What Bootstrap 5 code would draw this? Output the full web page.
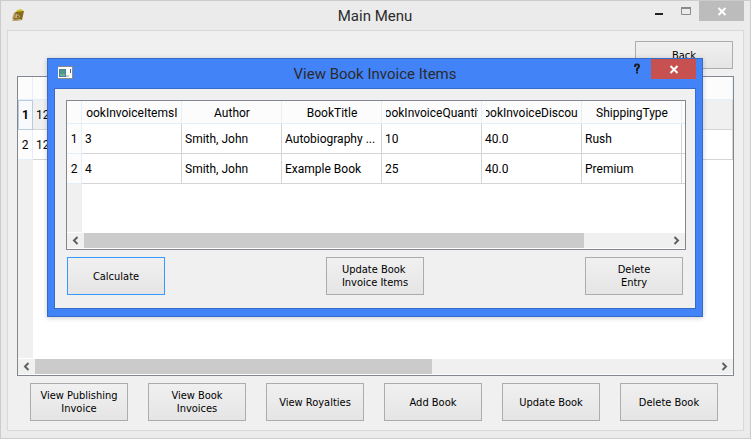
<!DOCTYPE html>
<html lang="en">
<head>
<meta charset="utf-8">
<meta name="viewport" content="width=device-width, initial-scale=1">
<title>Main Menu</title>
<link href="https://cdn.jsdelivr.net/npm/bootstrap@5.3.0/dist/css/bootstrap.min.css" rel="stylesheet">
<style>
  body { font-family: Roboto, "Noto Sans", sans-serif; font-size: 12px; line-height: 16px; color: #000; background: #ebebeb; }
  .main-window { background: #ebebeb; border: 1px solid #ccc; padding: 0 6px 7px; }
  .title-strip { height: 29px; }
  .title-text { font-size: 15px; line-height: 20px; font-weight: 400; color: #2b2b2b; margin: 0; padding-top: 5px; }
  .main-title { padding-left: 78px; }
  .app-icon { width: 16px; height: 16px; margin: 6px 0 0 4px; }
  .caption-btn { border: 0; padding: 0; background: transparent; height: 20px; width: 27px; }
  .caption-btn.closer { width: 45px; background: #bcbcbc; }
  .dialog-window .caption-btn.closer { background: #c75050; }
  .caption-btn svg, .arrow-btn svg { display: block; margin: auto; }
  .client-area { background: #f0f0f0; border: 1px solid #d9d9d9; }
  .main-client { padding: 10px 9px 9px; }
  .push { font-family: "DejaVu Sans Condensed", "DejaVu Sans", sans-serif; font-size: 11px; line-height: 13px; color: #000;
    width: 98px; height: 38px; padding: 0; border: 1px solid #acacac; border-radius: 0;
    background: linear-gradient(#f0f0f0, #e5e5e5); white-space: pre-line; }
  .push:hover { border-color: #7eb4ea; color: #000; }
  .push-short { height: 28px; }
  .push-default { border-color: #3399ff; }
  .push-label { display: inline-block; text-align: left; white-space: pre; }
  .back-row { padding-right: 1px; }
  .frame { background: #fff; border: 1px solid #828790; overflow: hidden; }
  .main-frame { margin-top: 7px; }
  .grid-table { table-layout: fixed; border-collapse: separate; border-spacing: 0; margin: 0; }
  .grid-table th, .grid-table td { padding: 0 2px 0 3px; height: 30px; border: 0 solid #d4d4d4; border-width: 0 1px 1px 0;
    font-weight: 400; white-space: nowrap; overflow: hidden; text-overflow: ellipsis; vertical-align: middle; }
  .grid-table thead th, .grid-table tbody th { background: #fcfcfc; border-color: #e5effa; text-align: center; }
  .grid-table thead th { height: 23px; padding: 2px 3px 0 4px; }
  .grid-table tbody th { padding: 0; }
  .grid-table tbody .current-head { font-weight: 700; border: 1px solid #b9cbe0; background: #f8fafd; }
  .grid-table .current-row td { background: #f0f0f0; }
  .index-col { width: 15px; }
  .field-col { width: 100px; }
  .inner-table { width: 715px; }
  .head-clip { display: flex; justify-content: center; overflow: hidden; }
  .index-strip { width: 15px; background: #f0f0f0; margin-bottom: 1px; }
  .scroll-track { background: #f0f0f0; height: 15px; margin-bottom: 1px; }
  .arrow-btn { width: 17px; flex: none; border: 0; padding: 0; background: transparent; }
  .thumb { background: #cbcbcb; }
  .action-row { gap: 20px; margin-top: 7px; padding-right: 3px; }
  .dialog-window { position: absolute; left: 47px; right: 48px; top: 58px; background: #4283f8; border: 1px solid #376bc8;
    padding: 0 6px 7px; box-shadow: 0 1px 5px rgba(0, 0, 0, .2); }
  .dialog-title { padding-left: 52px; }
  .dialog-client { border-color: #376bc8; padding: 11px 9px 13px 11px; }
  .dialog-frame { height: 150px; }
  .dialog-actions { margin: 7px 3px 0 1px; }
</style>
<script src="https://cdn.jsdelivr.net/npm/bootstrap@5.3.0/dist/js/bootstrap.bundle.min.js"></script>
</head>
<body>
<div class="main-window d-flex flex-column min-vh-100">
  <header class="title-strip d-flex align-items-start">
    <svg class="app-icon" viewBox="0 0 16 16" aria-hidden="true">
      <path d="M6 3l4-1 3 2-1 1H5z" fill="#c9c832"/>
      <path d="M4 5l9-1-2 9-9 1z" fill="#8a6a1c"/>
      <path d="M3 6l2-1-2 7H1z" fill="#b59a5c"/>
      <path d="M5 7l3 1 1 2-5 1z" fill="#c9b98a"/>
      <path d="M6 9l1-1 1 2-2 0z" fill="#6e5110"/>
      <path d="M1 13.500l9-1" stroke="#cbb98a" fill="none"/>
    </svg>
    <h1 class="title-text main-title flex-grow-1 text-center">Main Menu</h1>
    <button class="caption-btn" type="button" aria-label="Minimize"><svg width="27" height="20"><path d="M10 12h8v2h-8z" fill="#222"/></svg></button>
    <button class="caption-btn" type="button" aria-label="Maximize"><svg width="27" height="20"><path d="M9.500 7v6.500h9V7" fill="none" stroke="#8a8a8a"/><path d="M9 6h10v2H9z" fill="#8a8a8a"/></svg></button>
    <button class="caption-btn closer" type="button" aria-label="Close"><svg width="45" height="20"><path d="M19.500 7l7 7M26.500 7l-7 7" stroke="#fff" stroke-width="2"/></svg></button>
  </header>

  <main class="client-area main-client flex-grow-1 d-flex flex-column">
    <div class="back-row d-flex justify-content-end"><button class="btn push push-short" type="button">Back</button></div>
    <section class="frame main-frame flex-grow-1 d-flex flex-column">
      <table class="grid-table w-100">
        <colgroup><col class="index-col"><col></colgroup>
        <thead><tr><th></th><th></th></tr></thead>
        <tbody>
          <tr class="current-row"><th class="current-head" scope="row">1</th><td>12</td></tr>
          <tr><th scope="row">2</th><td>12</td></tr>
        </tbody>
      </table>
      <div class="index-strip flex-grow-1"></div>
      <div class="scroll-track d-flex">
        <button class="arrow-btn" type="button" aria-label="Scroll left"><svg width="17" height="15"><path d="M10.500 4L7 7.500l3.500 3.500" fill="none" stroke="#606060" stroke-width="2"/></svg></button>
        <div class="flex-grow-1 d-flex"><div class="thumb" style="width:58.3%"></div></div>
        <button class="arrow-btn" type="button" aria-label="Scroll right"><svg width="17" height="15"><path d="M6.500 4L10 7.500 6.500 11" fill="none" stroke="#606060" stroke-width="2"/></svg></button>
      </div>
    </section>
    <div class="action-row d-flex justify-content-center">
      <button class="btn push" type="button">View Publishing
Invoice</button>
      <button class="btn push" type="button">View Book
Invoices</button>
      <button class="btn push" type="button">View Royalties</button>
      <button class="btn push" type="button">Add Book</button>
      <button class="btn push" type="button">Update Book</button>
      <button class="btn push" type="button">Delete Book</button>
    </div>
  </main>
</div>

<div class="dialog-window" role="dialog" aria-labelledby="dialogTitle">
  <header class="title-strip d-flex align-items-start">
    <svg class="app-icon" viewBox="0 0 16 16" aria-hidden="true">
      <path d="M0 1h15v13H0z" fill="#8b8b8b"/><path d="M0 2h14v11H0z" fill="#fff"/>
      <path d="M1 4h7v8H1z" fill="#567c9c"/><path d="M2 5h5v6H2z" fill="#4a9a86"/><path d="M2 9h5v2H2z" fill="#67b596"/>
      <path d="M12 4h1v4h-1z" fill="#3b6a78"/><path d="M8 10h3v2H8z" fill="#ccc"/>
    </svg>
    <h2 class="title-text dialog-title flex-grow-1 text-center" id="dialogTitle">View Book Invoice Items</h2>
    <button class="caption-btn" type="button" aria-label="Help"><svg width="27" height="20"><path d="M11 8V7q0-1.500 1.500-1.500h1q1.500 0 1.500 1.500 0 1-1 2l-1 1v2M12 13.500h2" fill="none" stroke="#1e1e1e" stroke-width="2"/></svg></button>
    <button class="caption-btn closer" type="button" aria-label="Close"><svg width="45" height="20"><path d="M19.500 7l7 7M26.500 7l-7 7" stroke="#fff" stroke-width="2"/></svg></button>
  </header>
  <div class="client-area dialog-client">
    <div class="frame dialog-frame d-flex flex-column">
      <table class="grid-table inner-table">
        <colgroup><col class="index-col"><col class="field-col"><col class="field-col"><col class="field-col"><col class="field-col"><col class="field-col"><col class="field-col"><col class="field-col"></colgroup>
        <thead>
          <tr>
            <th></th>
            <th scope="col"><div class="head-clip"><span>BookInvoiceItemsID</span></div></th>
            <th scope="col">Author</th>
            <th scope="col">BookTitle</th>
            <th scope="col"><div class="head-clip"><span>BookInvoiceQuantity</span></div></th>
            <th scope="col"><div class="head-clip"><span>BookInvoiceDiscount</span></div></th>
            <th scope="col">ShippingType</th>
            <th></th>
          </tr>
        </thead>
        <tbody>
          <tr><th scope="row">1</th><td>3</td><td>Smith, John</td><td>Autobiography ...</td><td>10</td><td>40.0</td><td>Rush</td><td></td></tr>
          <tr><th scope="row">2</th><td>4</td><td>Smith, John</td><td>Example Book</td><td>25</td><td>40.0</td><td>Premium</td><td></td></tr>
        </tbody>
      </table>
      <div class="index-strip flex-grow-1"></div>
      <div class="scroll-track d-flex">
        <button class="arrow-btn" type="button" aria-label="Scroll left"><svg width="17" height="15"><path d="M10.500 4L7 7.500l3.500 3.500" fill="none" stroke="#606060" stroke-width="2"/></svg></button>
        <div class="flex-grow-1 d-flex"><div class="thumb" style="width:85.6%"></div></div>
        <button class="arrow-btn" type="button" aria-label="Scroll right"><svg width="17" height="15"><path d="M6.500 4L10 7.500 6.500 11" fill="none" stroke="#606060" stroke-width="2"/></svg></button>
      </div>
    </div>
    <div class="dialog-actions d-flex justify-content-between">
      <button class="btn push push-default" type="button">Calculate</button>
      <button class="btn push" type="button"><span class="push-label">Update Book
Invoice Items</span></button>
      <button class="btn push" type="button"><span class="push-label">Delete
 Entry</span></button>
    </div>
  </div>
</div>
</body>
</html>
